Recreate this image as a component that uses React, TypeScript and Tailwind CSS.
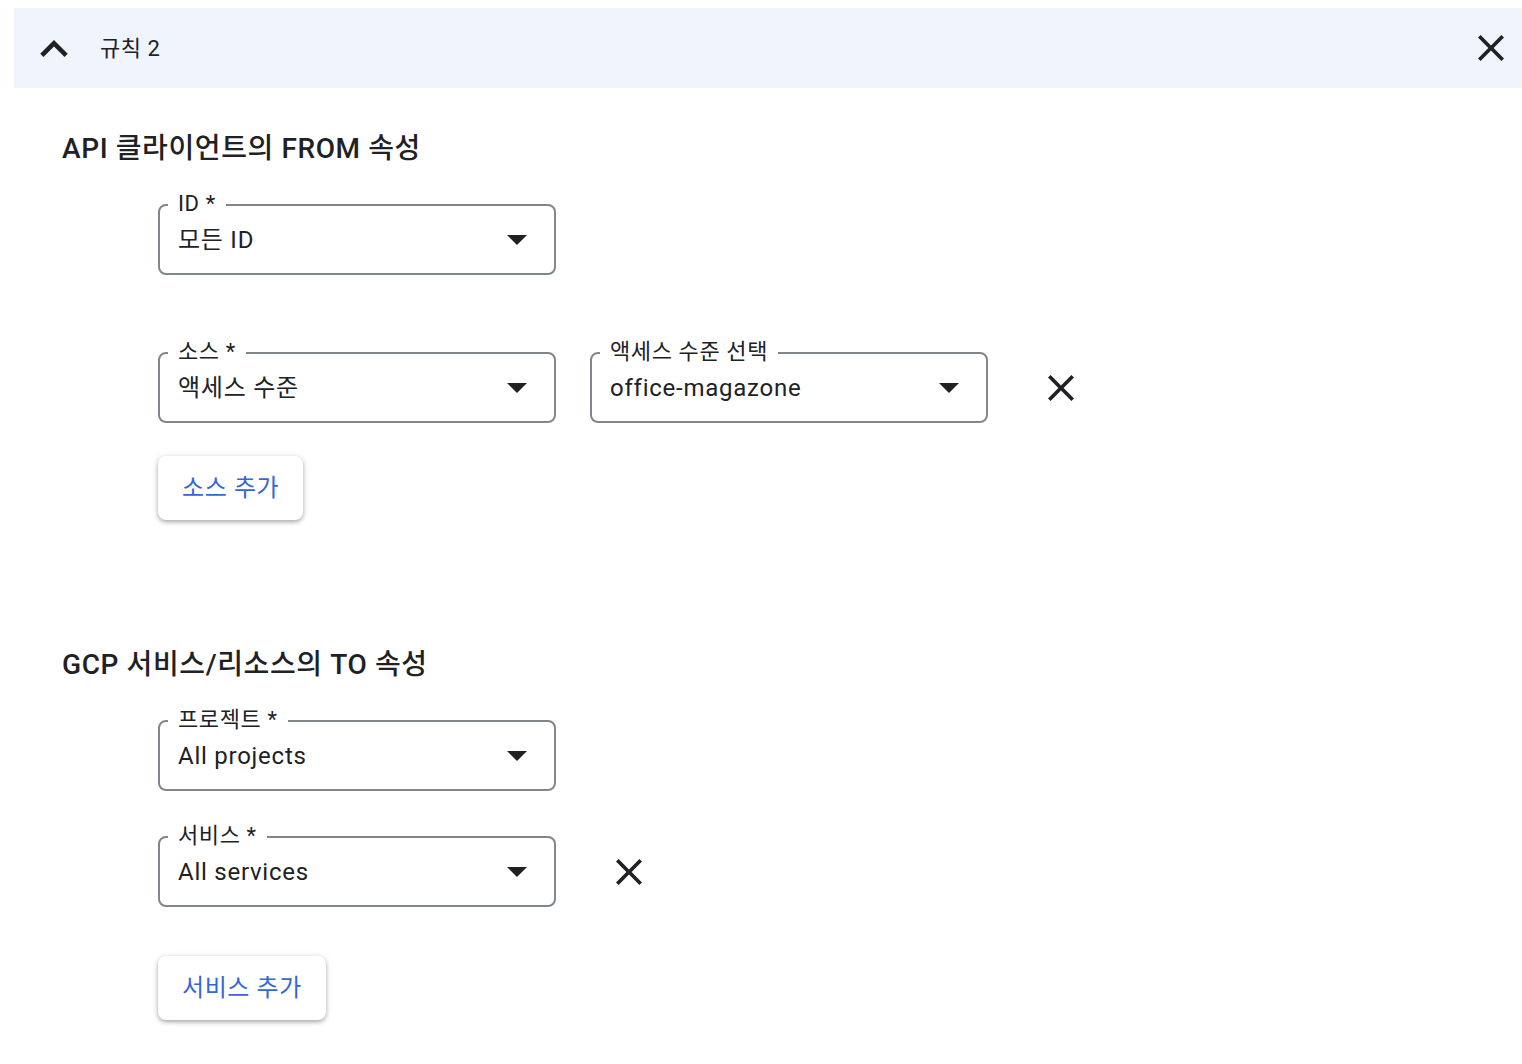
import type { ReactNode } from 'react'

const FONT = "font-['Roboto','Noto_Sans_CJK_KR',sans-serif]"

function CloseIcon({ className = '' }: { className?: string }) {
  return (
    <svg viewBox="5 5 14 14" className={className} fill="currentColor">
      <path d="M19 6.41L17.59 5 12 10.59 6.41 5 5 6.41 10.59 12 5 17.59 6.41 19 12 13.41 17.59 19 19 17.59 13.41 12z" />
    </svg>
  )
}

function ChevronUp() {
  return (
    <svg viewBox="6 8 12 7.41" className="h-[17px] w-[28px]" fill="currentColor">
      <path d="M12 8l-6 6 1.41 1.41L12 10.83l4.59 4.58L18 14z" />
    </svg>
  )
}

type SelectFieldProps = {
  label: string
  value: string
}

function SelectField({ label, value }: SelectFieldProps) {
  return (
    <div className="relative flex h-[71px] w-[398px] items-center rounded-lg border-2 border-[#80868b] pl-[18px] pr-[27px]">
      <span className="absolute -top-[16px] left-[8px] bg-white px-[10px] text-[22px] leading-[28px] tracking-[0.6px] text-[#202124]">
        {label}
      </span>
      <span className="flex-1 text-[24px] tracking-[0.75px] text-[#202124]">{value}</span>
      <svg viewBox="0 0 20 10" className="h-[10px] w-[20px]" fill="#202124">
        <path d="M0 0h20L10 10z" />
      </svg>
    </div>
  )
}

function AddButton({ children }: { children: ReactNode }) {
  return (
    <button
      type="button"
      className="h-[64px] rounded-lg bg-white px-[24px] text-[24px] tracking-[0.6px] text-[#3367d6] shadow-[0_2px_4px_rgba(0,0,0,0.3),0_1px_8px_rgba(0,0,0,0.08)]"
    >
      {children}
    </button>
  )
}

function SectionTitle({ children, className = '' }: { children: ReactNode; className?: string }) {
  return (
    <h2 className={`text-[28px] font-medium leading-[32px] tracking-[0.6px] text-[#202124] ${className}`}>
      {children}
    </h2>
  )
}

export default function App() {
  return (
    <div className={`min-h-screen bg-white ${FONT}`}>
      <div className="ml-[14px] mt-[8px] flex h-[80px] items-center bg-[#eff4fd] pl-[26px] pr-[18px] text-[#202124]">
        <ChevronUp />
        <span className="ml-[32px] flex-1 text-[22px] tracking-[0.5px]">규칙 2</span>
        <CloseIcon className="h-[26px] w-[26px]" />
      </div>

      <div className="pl-[62px]">
        <SectionTitle className="mt-[45px]">API 클라이언트의 FROM 속성</SectionTitle>
        <div className="pl-[96px]">
          <div className="mt-[39px]">
            <SelectField label="ID *" value="모든 ID" />
          </div>
          <div className="mt-[77px] flex items-center">
            <SelectField label="소스 *" value="액세스 수준" />
            <div className="ml-[34px]">
              <SelectField label="액세스 수준 선택" value="office-magazone" />
            </div>
            <CloseIcon className="ml-[60px] h-[26px] w-[26px] text-[#202124]" />
          </div>
          <div className="mt-[33px]">
            <AddButton>소스 추가</AddButton>
          </div>
        </div>

        <SectionTitle className="mt-[129px]">GCP 서비스/리소스의 TO 속성</SectionTitle>
        <div className="pl-[96px]">
          <div className="mt-[39px]">
            <SelectField label="프로젝트 *" value="All projects" />
          </div>
          <div className="mt-[45px] flex items-center">
            <SelectField label="서비스 *" value="All services" />
            <CloseIcon className="ml-[60px] h-[26px] w-[26px] text-[#202124]" />
          </div>
          <div className="mt-[49px] pb-[44px]">
            <AddButton>서비스 추가</AddButton>
          </div>
        </div>
      </div>
    </div>
  )
}
